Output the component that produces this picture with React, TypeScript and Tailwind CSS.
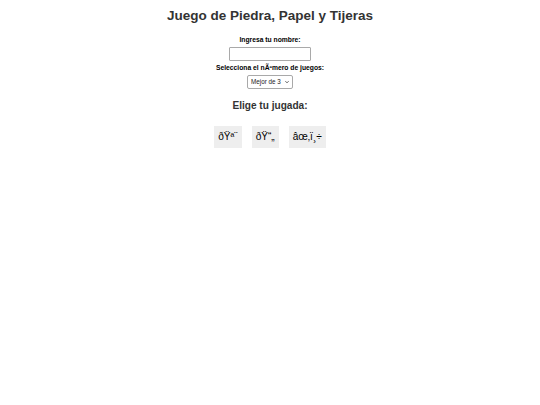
import { useState } from 'react'

const CHOICES = [
  { id: 'piedra', label: 'ðŸª¨' },
  { id: 'papel', label: 'ðŸ“„' },
  { id: 'tijeras', label: 'âœ‚ï¸÷' },
]

export default function App() {
  const [name, setName] = useState('')
  const [games, setGames] = useState('3')
  const [pick, setPick] = useState<string | null>(null)

  return (
    <div className="min-h-[405px] bg-white text-center text-[#333] font-['Liberation_Sans',Arial,sans-serif]">
      <div className="flex flex-col items-center pt-[8px]">
        <h1 className="text-[13.5px] leading-[16px] font-bold">Juego de Piedra, Papel y Tijeras</h1>

        <label htmlFor="nombre" className="mt-[12px] text-[6.75px] leading-[8px] font-bold text-black">
          Ingresa tu nombre:
        </label>
        <input
          id="nombre"
          value={name}
          onChange={e => setName(e.target.value)}
          className="mt-[3px] w-[82px] h-[14px] border border-[#a9a9a9] rounded-[1px] text-[6.75px] px-1 outline-none"
        />

        <label htmlFor="juegos" className="mt-[3px] text-[6.75px] leading-[8px] font-bold text-black">
          Selecciona el nÃºmero de juegos:
        </label>
        <div className="relative mt-[3px]">
          <select
            id="juegos"
            value={games}
            onChange={e => setGames(e.target.value)}
            className="appearance-none block w-[46px] h-[14px] pl-[3px] pr-[9px] border border-[#a9a9a9] rounded-[2px] text-[6.3px] leading-[12px] text-[#222] bg-white outline-none"
          >
            <option value="3">Mejor de 3</option>
            <option value="5">Mejor de 5</option>
            <option value="7">Mejor de 7</option>
          </select>
          <svg
            viewBox="0 0 10 10"
            className="pointer-events-none absolute right-[4px] top-[5px] w-[4px] h-[4px]"
            fill="none"
            stroke="#333"
            strokeWidth="2"
          >
            <path d="M1 3l4 4 4-4" />
          </svg>
        </div>

        <h2 className="mt-[11px] text-[10.1px] leading-[12px] font-bold">Elige tu jugada:</h2>

        <div className="mt-[14px] flex gap-[10px]">
          {CHOICES.map(c => (
            <button
              key={c.id}
              onClick={() => setPick(c.id)}
              className={`h-[22px] px-[4px] text-[10.1px] leading-[12px] text-black ${pick === c.id ? 'bg-[#dddddd]' : 'bg-[#eeeeee]'}`}
            >
              {c.label}
            </button>
          ))}
        </div>
      </div>
    </div>
  )
}
